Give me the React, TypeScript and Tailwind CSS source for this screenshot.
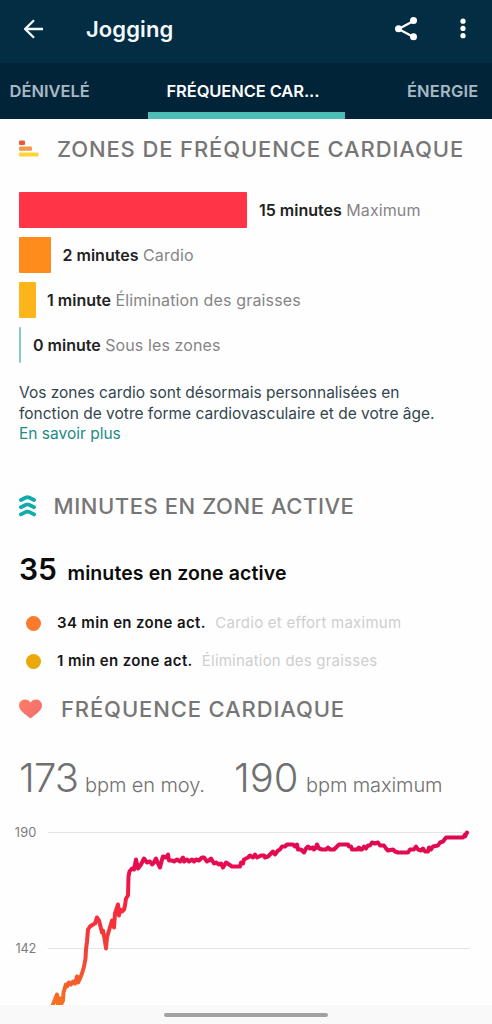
import type { ReactNode } from "react";

type Zone = { bar: string; time: string; name: string; nameClass: string };

const zones: Zone[] = [
  { bar: "w-[228px] bg-[#ff3447] mr-[12px]", time: "15 minutes", name: "Maximum", nameClass: "tracking-[0.1px]" },
  { bar: "w-[32px] bg-[#fd8c1c] mr-[11.5px]", time: "2 minutes", name: "Cardio", nameClass: "tracking-[0.2px]" },
  { bar: "w-[17px] bg-[#fdb51b] mr-[11px]", time: "1 minute", name: "Élimination des graisses", nameClass: "tracking-[0.15px]" },
  { bar: "w-[2px] bg-[#7fcfc6] mr-[12px]", time: "0 minute", name: "Sous les zones", nameClass: "tracking-[0.1px]" },
];

function SectionTitle({ icon, children, className }: { icon: ReactNode; children: ReactNode; className: string }) {
  return (
    <div className="flex h-[30px] items-center pl-[19px]">
      {icon}
      <h2 className={`text-[22px] leading-[30px] font-medium text-[#767676] ${className}`}>{children}</h2>
    </div>
  );
}

function Header() {
  return (
    <header className="bg-[#022d43]">
      <div className="flex h-[63px] items-center pb-[5px]">
        <svg className="ml-[24px] h-[20px] w-[20px]" viewBox="0 0 20 20" fill="none" stroke="#f4fafc" strokeWidth="2.3">
          <path d="M19 10H2M10 1.2L1.2 10L10 18.8" />
        </svg>
        <h1 className="ml-[42px] text-[22px] leading-[28px] font-semibold tracking-[0.1px] text-[#f4fafc]">Jogging</h1>
        <svg className="ml-auto h-[26px] w-[24px]" viewBox="0 0 24 26" fill="#fff">
          <path d="M19.5 5L4.5 13L19.5 21" fill="none" stroke="#fff" strokeWidth="2.2" />
          <circle cx="19.5" cy="4.5" r="3.5" />
          <circle cx="4.5" cy="12.7" r="3.5" />
          <circle cx="19.5" cy="20.8" r="3.5" />
        </svg>
        <svg className="mr-[24px] ml-[40px] h-[22px] w-[10px]" viewBox="0 0 10 22" fill="#fff">
          <circle cx="5" cy="3.2" r="2.6" />
          <circle cx="5" cy="10.4" r="2.6" />
          <circle cx="5" cy="17.7" r="2.6" />
        </svg>
      </div>
      <nav className="flex h-[56px] bg-[#022439] text-[16.5px] leading-[57px] font-semibold text-[#a9b9c4]">
        <span className="w-[148px] pl-[9.5px]">DÉNIVELÉ</span>
        <span className="w-[197px] border-b-[7px] border-[#4dbdb7] pl-[18.5px] text-white tracking-[-0.1px]">FRÉQUENCE CAR...</span>
        <span className="ml-auto pr-[13.5px] tracking-[0.2px]">ÉNERGIE</span>
      </nav>
    </header>
  );
}

const trace =
  "M53 1004L55 999L57 994L58 1004L60 998L61 1004L63 1000L63.500 992L65 987L66 984L67 986L69 982L71 984L73 981L75 983L77 976L78 982L80 978L82 973L84 966L85.500 958L86 949L87 941L88 929L90 926L93 924L95 923L97 917L99 920L100 924L102 932L103 930L105 941L106 948L107 937L109 930L112 920L113 921L114 927L115 913L117 907L118 904L119 915L120 909L122 911L124 909L125 905L126 898L128 895L128.500 876L129.500 871L132 868L134 869L136 859L138 868L141 864L144 858L147 862L150 861L152 864L154 862L156 858L158 863L160 867L162 859L163 856L166 857L168 854L169 860L172 860L174 861L177 859L180 861L183 857L184 861L187 859L189 861L192 859L194 861L196 859L199 860L202 857L204 857L207 861L209 860L211 858L214 863L216 862L219 864L221 863L223 867L226 862L229 864L232 866L240 866L241 862L243 863L244 859L246 858L248 857L250 855L253 857L255 854L257 857L261 855L264 855L265 857L268 856L271 853L273 851L275 854L278 850L280 849L282 846L285 846L287 844L293 844L295 846L297 844L298 849L301 849L304 852L306 848L308 846L310 848L313 847L314 849L316 847L317 844L319 848L322 849L326 849L328 847L330 849L334 849L337 846L339 844L348 844L349 846L351 846L352 849L357 849L359 847L360 849L362 849L364 846L366 848L368 845L370 845L372 842L375 843L378 842L380 845L384 845L386 848L388 850L393 849L395 851L398 852L408 852L410 849L414 849L416 846L418 849L421 850L423 848L425 851L428 851L429 847L431 849L433 846L438 845L440 842L443 841L446 837L463 837L465 834L465 836L467 832";

function HeartChart() {
  return (
    <svg className="block h-[190px] w-[492px]" viewBox="0 815 492 190">
      <defs>
        <linearGradient id="effort" x1="0" y1="830" x2="0" y2="1005" gradientUnits="userSpaceOnUse">
          <stop offset="0" stopColor="#dc0850" />
          <stop offset=".22" stopColor="#e90d50" />
          <stop offset=".47" stopColor="#f72c3b" />
          <stop offset=".72" stopColor="#ef4636" />
          <stop offset="1" stopColor="#f8731f" />
        </linearGradient>
      </defs>
      <path d="M48 832.5H470M48 948.5H470" stroke="#e4e4e4" strokeWidth="1" />
      <g fill="#7b7b7b" fontFamily="Inter, sans-serif" fontSize="12.8">
        <text x="14.8" y="836.6" letterSpacing=".2">190</text>
        <text x="15.5" y="952.6" letterSpacing="-.2">142</text>
      </g>
      <path d={trace} transform="translate(0 .5)" fill="none" stroke="url(#effort)" strokeWidth="4" strokeLinejoin="round" strokeLinecap="round" />
    </svg>
  );
}

export default function App() {
  return (
    <div className="flex h-[1024px] w-[492px] flex-col overflow-hidden bg-[#fefefe] font-['Inter',sans-serif] whitespace-nowrap">
      <Header />
      <main className="flex flex-col">
        <div className="mt-[15px]">
          <SectionTitle
            className="ml-[18px] tracking-[0.87px]"
            icon={
              <svg className="h-[18px] w-[20px]" viewBox="0 0 20 18">
                <rect x="0" y="0.500" width="6" height="4.500" rx="1" fill="#e65a3c" />
                <rect x="0" y="6.500" width="13" height="4.200" rx="1" fill="#f39a4b" />
                <rect x="0" y="12.500" width="19.5" height="4" rx="1" fill="#fcd535" />
              </svg>
            }
          >
            ZONES DE FRÉQUENCE CARDIAQUE
          </SectionTitle>
        </div>

        <ul className="mt-[28px] flex flex-col gap-[9px] pl-[19px]">
          {zones.map((z) => (
            <li key={z.time} className="flex h-[36px] items-center text-[16px] leading-[24px]">
              <span className={`h-[36px] rounded-[1px] ${z.bar}`} />
              <span className="font-semibold text-[#222]">{z.time}</span>
              <span className={`ml-[4.5px] text-[#858585] ${z.nameClass}`}>{z.name}</span>
            </li>
          ))}
        </ul>

        <p className="mt-[20px] pl-[19px] text-[15.5px] leading-[20.5px] text-[#33464e]">
          Vos zones cardio sont désormais personnalisées en
          <br />
          fonction de votre forme cardiovasculaire et de votre âge.
          <br />
          <a className="text-[#218b86]">En savoir plus</a>
        </p>

        <div className="mt-[46.5px]">
          <SectionTitle
            className="ml-[17.5px] tracking-[0.56px]"
            icon={
              <svg className="h-[22px] w-[17px]" viewBox="0 0 17 22" fill="none" stroke="#12abac" strokeWidth="3.8" strokeLinecap="round" strokeLinejoin="round">
                <path d="M1.9 5L7 2.500Q8.500 2 10 2.500L15.100 5M1.900 12.200L7 9.700Q8.500 9.200 10 9.700L15.100 12.200M1.900 19.400L7 16.900Q8.500 16.400 10 16.900L15.100 19.400" />
              </svg>
            }
          >
            MINUTES EN ZONE ACTIVE
          </SectionTitle>
        </div>

        <div className="mt-[28px] flex h-[40px] items-baseline pl-[19px] leading-[40px] text-[#0b0b0b]">
          <strong className="text-[30px] font-semibold">35</strong>
          <span className="ml-[10.5px] text-[19.5px] font-semibold tracking-[0.1px]">minutes en zone active</span>
        </div>

        <div className="mt-[24px] flex flex-col gap-[18px] pl-[26px] text-[15px] leading-[20px]">
          <div className="flex items-center">
            <span className="h-[15px] w-[15px] rounded-full bg-[#fb7a2b]" />
            <span className="ml-[16px] font-semibold tracking-[0.35px] text-[#161616]">34 min en zone act.</span>
            <span className="ml-[9.5px] tracking-[0.25px] text-[#cecece]">Cardio et effort maximum</span>
          </div>
          <div className="flex items-center">
            <span className="h-[15px] w-[15px] rounded-full bg-[#eba909]" />
            <span className="ml-[16px] font-semibold tracking-[0.38px] text-[#161616]">1 min en zone act.</span>
            <span className="ml-[9px] tracking-[0.22px] text-[#cecece]">Élimination des graisses</span>
          </div>
        </div>

        <div className="mt-[23px]">
          <SectionTitle
            className="ml-[19px] tracking-[0.87px]"
            icon={
              <svg className="h-[20px] w-[23px]" viewBox="0 0 23 20">
                <defs>
                  <linearGradient id="heart" x1="0" y1="0" x2="1" y2="1">
                    <stop offset="0" stopColor="#fb8064" />
                    <stop offset="1" stopColor="#f26a70" />
                  </linearGradient>
                </defs>
                <path d="M11.5 19.5C9 17 0 12.500 0 6.500C0 3 2.700.5 6 .5C8.300.5 10.300 1.700 11.500 3.500C12.700 1.700 14.700.5 17 .5C20.300.5 23 3 23 6.500C23 12.500 14 17 11.500 19.500Z" fill="url(#heart)" />
              </svg>
            }
          >
            FRÉQUENCE CARDIAQUE
          </SectionTitle>
        </div>

        <div className="mt-[29px] flex h-[50px] items-baseline pl-[19px] leading-[50px] font-[350] text-[#707070]">
          <span className="w-[66px] text-[40px] tracking-[-0.8px]">173</span>
          <span className="w-[149px] text-[20px] tracking-[-0.1px]">bpm en moy.</span>
          <span className="w-[72px] text-[40px]">190</span>
          <span className="text-[20px] tracking-[-0.1px]">bpm maximum</span>
        </div>
      </main>

      <div className="mt-auto">
        <HeartChart />
        <footer className="flex h-[19px] justify-center bg-[#f9f9f9] pt-[7.5px]">
          <span className="h-[4px] w-[164px] rounded-full bg-[#a2a2a2]" />
        </footer>
      </div>
    </div>
  );
}
